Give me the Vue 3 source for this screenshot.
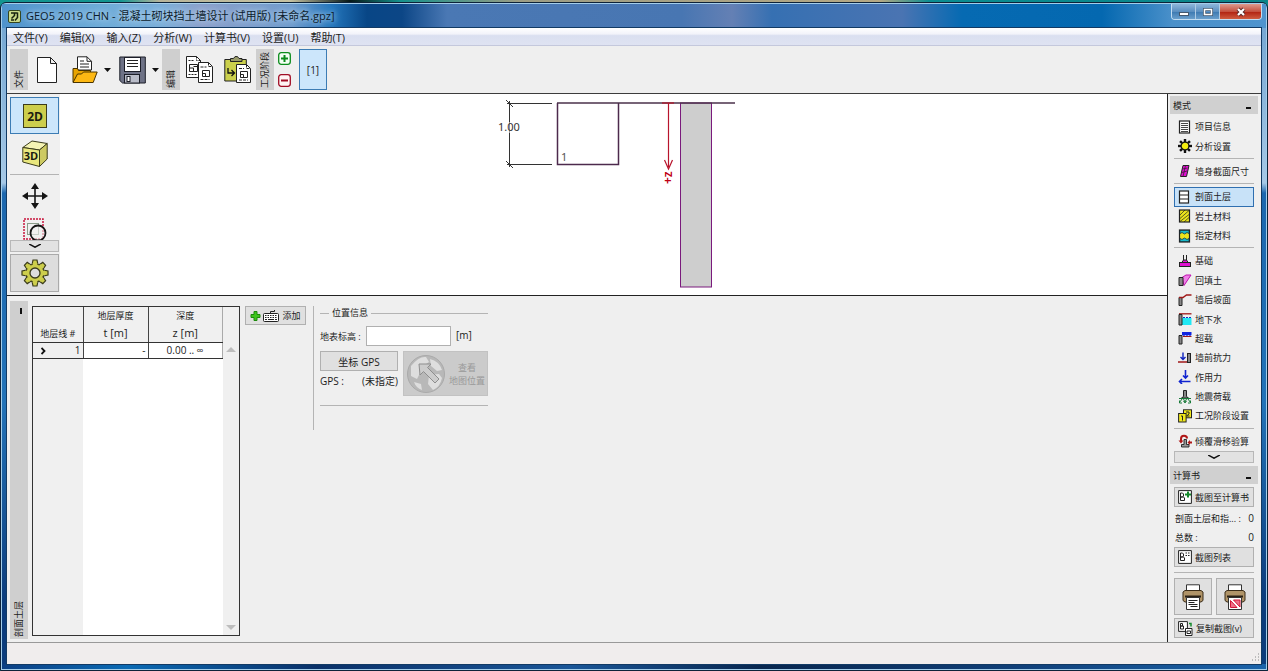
<script setup>
const menus = ['文件(Y)', '编辑(X)', '输入(Z)', '分析(W)', '计算书(V)', '设置(U)', '帮助(T)']

const groups = [
  [
    { id: 'info', label: '项目信息' },
    { id: 'settings', label: '分析设置' },
  ],
  [{ id: 'wall', label: '墙身截面尺寸' }],
  [
    { id: 'profile', label: '剖面土层', active: true },
    { id: 'soil', label: '岩土材料' },
    { id: 'assign', label: '指定材料' },
  ],
  [
    { id: 'base', label: '基础' },
    { id: 'backfill', label: '回填土' },
    { id: 'terrain', label: '墙后坡面' },
    { id: 'water', label: '地下水' },
    { id: 'surcharge', label: '超载' },
    { id: 'resist', label: '墙前抗力' },
    { id: 'force', label: '作用力' },
    { id: 'quake', label: '地震荷载' },
    { id: 'stage', label: '工况阶段设置' },
  ],
  [{ id: 'verify', label: '倾覆滑移验算' }],
]

const gear = Array.from({ length: 8 }, (_, i) => i * 45)
</script>

<template>
  <div class="desktop">
    <div class="window">
      <header class="titlebar">
        <svg class="logo" width="13" height="13" viewBox="0 0 13 13">
          <rect x=".5" y=".5" width="12" height="12" rx="1.5" fill="#c9d98a" stroke="#33451f" />
          <path d="M3 3h3.500v2.500L3.500 8.500M3 10h3M9.500 2.500v5L7 10.500M6.500 3h3" fill="none" stroke="#17220f" stroke-width="1.500" />
        </svg>
        <h1>GEO5 2019 CHN - 混凝土砌块挡土墙设计 (试用版) [未命名.gpz]</h1>
        <div class="winbtns">
          <button aria-label="最小化"><svg width="12" height="10"><rect x="1.500" y="5.500" width="9" height="3" fill="#fff" stroke="#44586e" /></svg></button>
          <button aria-label="最大化"><svg width="12" height="10"><rect x="2.500" y="2.500" width="7" height="5" fill="none" stroke="#44586e" stroke-width="3" /><rect x="2.500" y="2.500" width="7" height="5" fill="none" stroke="#fff" stroke-width="1.500" /></svg></button>
          <button class="close" aria-label="关闭"><svg width="12" height="10"><path d="M3 2l6 6M9 2l-6 6" stroke="#5b2a2a" stroke-width="4" /><path d="M3 2l6 6M9 2l-6 6" stroke="#fff" stroke-width="2.200" /></svg></button>
        </div>
      </header>

      <div class="client">
        <nav class="menubar">
          <button v-for="m in menus" :key="m">{{ m }}</button>
        </nav>

        <div class="toolbar">
          <div class="strip"><span>文件</span></div>
          <button class="tool t-new" aria-label="新建">
            <svg width="20" height="28" viewBox="0 0 20 28"><path d="M.5 1.500h13l6 6v19H.5zM13.500 1.500v6h6" fill="#fff" stroke="#222" /></svg>
          </button>
          <button class="tool t-open" aria-label="打开">
            <svg width="26" height="28" viewBox="0 0 26 28">
              <path d="M5.500 20V.8h9.500l4.500 4.500V14H5.500z" fill="#fff" stroke="#222" />
              <path d="M15 .8v4.500h4.500M8 5h4M8 8h9M8 11h9" fill="none" stroke="#222" />
              <path d="M1 26V12.500h4.500l1 2h12V26z" fill="#e8a400" stroke="#4a3400" />
              <path d="M1 26.500l4.500-8.500h4l2-2h13.700l-4 10.500z" fill="#fdb813" stroke="#4a3400" />
            </svg>
          </button>
          <button class="drop" aria-label="打开选项"><svg width="7" height="4"><path d="M0 0h7L3.500 4z" fill="#111" /></svg></button>
          <button class="tool t-save" aria-label="保存">
            <svg width="27" height="28" viewBox="0 0 27 28">
              <path d="M.8 1h25.500v26H3.500L.8 24.500z" fill="#6e7286" stroke="#1c1e28" />
              <rect x="5.500" y="1.500" width="16" height="14" fill="#fff" stroke="#1c1e28" />
              <path d="M8 4.500h11M8 7.500h11M8 10.500h11" stroke="#222" />
              <rect x="5.500" y="18.500" width="15" height="8.500" fill="#b9bcc8" stroke="#1c1e28" />
              <rect x="8" y="20.500" width="3" height="5" fill="#fff" stroke="#1c1e28" />
            </svg>
          </button>
          <button class="drop last" aria-label="保存选项"><svg width="7" height="4"><path d="M0 0h7L3.500 4z" fill="#111" /></svg></button>
          <div class="strip"><span>编辑</span></div>
          <button class="tool t-copy" aria-label="复制">
            <svg width="27" height="28" viewBox="0 0 27 28">
              <path d="M.5.5h10l4 4v17H.5z" fill="#fff" stroke="#222" />
              <path d="M10.500.5v4h4M2.500 4.500h5M2.500 18.500h8" fill="none" stroke="#222" stroke-dasharray="2 1" />
              <path d="M3.500 8.500h8v7h-8zM3.500 12h4v3.500M7.500 10.500h4" fill="none" stroke="#222" />
              <path d="M12.500 6.500h10l4 4v16h-14z" fill="#fff" stroke="#222" />
              <path d="M22.500 6.500v4h4M14.500 11h6M14.500 23.500h9" fill="none" stroke="#222" stroke-dasharray="3 1" />
              <path d="M16.500 14.500h7v6h-7zM16.500 17.500h3v3" fill="none" stroke="#222" />
            </svg>
          </button>
          <button class="tool t-paste" aria-label="粘贴">
            <svg width="27" height="28" viewBox="0 0 27 28">
              <path d="M.8 3.500h21.500V25H.8z" fill="#cbd04c" stroke="#222" />
              <path d="M6.500 5.500v-3h3L11 .6h2.500L15 2.500h3v3z" fill="#9a9c6a" stroke="#222" />
              <path d="M12.500 8.500h10l4 4v14h-14z" fill="#fff" stroke="#222" />
              <path d="M22.500 8.500v4h4M15 12.500h5M15 24h9" fill="none" stroke="#222" stroke-dasharray="3 1" />
              <path d="M16.500 15.500h7v6h-7zM16.500 18.500h3v3" fill="none" stroke="#222" />
              <path d="M4 12v5h6M7.500 14l3 3-3 3" fill="none" stroke="#111" stroke-width="1.300" />
            </svg>
          </button>
          <div class="strip"><span>工况阶段</span></div>
          <div class="pm">
            <button aria-label="添加工况"><svg width="13" height="13"><rect x=".7" y=".7" width="11.600" height="11.600" rx="2.500" fill="#f4fff4" stroke="#0c8c1c" stroke-width="1.300" /><path d="M6.500 3v7M3 6.500h7" stroke="#0c8c1c" stroke-width="2" /></svg></button>
            <button aria-label="删除工况"><svg width="13" height="13"><rect x=".7" y=".7" width="11.600" height="11.600" rx="2.500" fill="#fff4f4" stroke="#a00c24" stroke-width="1.300" /><path d="M3 6.500h7" stroke="#a00c24" stroke-width="2" /></svg></button>
          </div>
          <button class="stagebtn">[1]</button>
        </div>

        <div class="body">
          <main class="work">
            <section class="view">
              <div class="viewtools">
                <button class="vt on" aria-label="2D">
                  <svg width="24" height="24"><rect x=".5" y=".5" width="23" height="23" fill="#cdce4c" stroke="#3b3c1c" /><text x="12" y="16.500" text-anchor="middle" font-size="12" font-weight="700" fill="#1c1c10">2D</text></svg>
                </button>
                <button class="vt plain" aria-label="3D">
                  <svg width="26" height="28" viewBox="0 0 26 28">
                    <path d="M.8 7.500L10 1l15.200 2.500L17.500 10z" fill="#f5f4b4" stroke="#3b3c1c" />
                    <path d="M17.500 10l7.700-6.500V19L17.500 26.500z" fill="#cdca62" stroke="#3b3c1c" />
                    <path d="M.8 7.500L17.500 10v16.500L.8 22z" fill="#e9e77e" stroke="#3b3c1c" />
                    <text x="9" y="20" text-anchor="middle" font-size="11" font-weight="700" fill="#1c1c10">3D</text>
                  </svg>
                </button>
                <hr />
                <button class="vt plain mv" aria-label="平移">
                  <svg width="26" height="26" viewBox="0 0 26 26"><path d="M13 3v20M3 13h20" stroke="#151515" stroke-width="1.600" /><path d="M13 0l4 6H9zM13 26l4-6H9zM0 13l6-4v8zM26 13l-6-4v8z" fill="#151515" /></svg>
                </button>
                <button class="vt plain zm" aria-label="窗口缩放">
                  <svg width="24" height="22" viewBox="0 0 24 22"><rect x="1" y="1" width="19" height="20" fill="none" stroke="#c8143c" stroke-width="1.500" stroke-dasharray="2 1" /><rect x="4.500" y="5.500" width="11" height="11" fill="none" stroke="#8a9c8a" /><circle cx="15" cy="15" r="7.500" fill="#f0f0f0" fill-opacity=".6" stroke="#151515" stroke-width="1.800" /></svg>
                </button>
                <button class="more" aria-label="更多工具"><svg width="12" height="4"><path d="M0 0l6 3.200L12 0" fill="none" stroke="#111" stroke-width="1.500" /></svg></button>
                <button class="vt cog" aria-label="视图设置">
                  <svg width="28" height="28" viewBox="-14 -14 28 28">
                    <path v-for="a in gear" :key="a" :transform="`rotate(${a})`" d="M-3-8l1-5h4l1 5z" fill="#cdce4c" stroke="#3b3c1c" stroke-width="1.200" />
                    <circle r="9" fill="#cdce4c" stroke="#3b3c1c" stroke-width="1.200" />
                    <path v-for="a in gear" :key="'f' + a" :transform="`rotate(${a})`" d="M-2.300-7.500h4.600v-2.500h-4.600z" fill="#cdce4c" />
                    <circle r="5" fill="#ddd" stroke="#3b3c1c" stroke-width="1.300" />
                  </svg>
                </button>
              </div>
              <svg class="drawing">
                <g fill="none" stroke="#333">
                  <path d="M445 9.500h45M445 70.500h45M447.500 7v66" />
                  <path d="M444 6l7 7M444 67l7 7" />
                </g>
                <rect x="434" y="28" width="25" height="11" fill="#fff" />
                <path d="M447.500 28v11" stroke="#999" />
                <text x="436" y="37" font-size="11" fill="#333">1.00</text>
                <rect x="618.500" y="9" width="31" height="184" fill="#cecece" stroke="#7a1a7c" />
                <path d="M495.500 9v61.500h61V9" fill="none" stroke="#4d2a4d" stroke-width="1.500" />
                <path d="M495 9h178" stroke="#4a304a" stroke-width="1.500" />
                <text x="499" y="67" font-size="11" fill="#555">1</text>
                <path d="M600 9h12" stroke="#c00014" />
                <path d="M606.500 9v64M602.500 66l4 9 4-9" fill="none" stroke="#b8142c" stroke-width="1.200" />
                <text transform="translate(610 90) rotate(-90)" font-size="12" font-weight="600" fill="#c00014">+z</text>
              </svg>
            </section>

            <section class="frame">
              <div class="strip tall"><i></i><span>剖面土层</span></div>
              <div class="gridbox">
                <table>
                  <thead>
                    <tr><th class="c1">地层线 #</th><th class="c2">地层厚度<br /><b>t [m]</b></th><th class="c3">深度<br /><b>z [m]</b></th></tr>
                  </thead>
                  <tbody>
                    <tr><td class="first"><div><svg width="5" height="8"><path d="M.5 1l3 3-3 3" fill="none" stroke="#111" stroke-width="1.800" /></svg>1</div></td><td class="num">-</td><td class="mid">0.00 .. ∞</td></tr>
                  </tbody>
                </table>
                <div class="scroll">
                  <svg width="10" height="5"><path d="M0 5h10L5 0z" fill="#bdbdbd" /></svg>
                  <svg width="10" height="5"><path d="M0 0h10L5 5z" fill="#bdbdbd" /></svg>
                </div>
              </div>
              <div class="addcol">
                <button class="btn add">
                  <svg width="29" height="14" viewBox="0 0 29 14">
                    <path d="M4 2.500h3v3h3v3H7v3H4v-3H1v-3h3z" fill="#3ec41c" stroke="#1c8a0c" />
                    <rect x="13.500" y="4.500" width="15" height="8" rx="1" fill="#fff" stroke="#222" />
                    <path d="M15 6.500h12M15 8.500h12" stroke="#222" stroke-dasharray="1.500 1" /><path d="M15 10.500h2M18 10.500h6M25 10.500h2" stroke="#222" /><path d="M20.500 4V2.500h4V1" fill="none" stroke="#222" />
                  </svg>
                  添加
                </button>
              </div>
              <div class="loc">
                <div class="legend"><span>位置信息</span></div>
                <div class="row"><label for="elev">地表标高 :</label><input id="elev" type="text" /><span class="unit">[m]</span></div>
                <div class="gps">
                  <div class="gpsleft">
                    <button class="btn coord">坐标 GPS</button>
                    <div class="gpsval"><span>GPS :</span><span>(未指定)</span></div>
                  </div>
                  <button class="map" disabled>
                    <svg width="40" height="40" viewBox="0 0 40 40">
                      <circle cx="20" cy="20" r="18.500" fill="#b8b8b8" stroke="#aaa" />
                      <path d="M5 12q8-10 15-9l3 5-6 4 2 5-5 2-3 6-6-3zM24 5q9 2 12 11l-5 1-6-5zM23 21l10-1 3 4q-2 9-9 12l-5-6zM8 28l7 2 1 6q-6-2-8-8z" fill="#dedede" />
                      <path d="M13 10h12l-3.500 3.500L33 25l-4 4-11.500-11.500L14 21z" fill="#ccc" stroke="#8e8e8e" />
                    </svg>
                    <span>查看<br />地图位置</span>
                  </button>
                </div>
                <hr />
              </div>
            </section>
          </main>

          <aside class="side">
            <div class="head"><span>模式</span><i></i></div>
            <div class="modes">
              <template v-for="(g, gi) in groups" :key="gi">
                <hr v-if="gi" />
                <button v-for="it in g" :key="it.id" class="mode" :class="{ active: it.active }">
                  <svg width="14" height="14" viewBox="0 0 14 14">
                    <template v-if="it.id === 'info'"><rect x="1.500" y="1" width="10" height="12" fill="#fff" stroke="#222" stroke-width="1.200" /><path d="M3 3.500h7M3 5.500h7M3 7.500h7M3 9.500h7M3 11.500h7" stroke="#333" stroke-width=".9" /></template>
                    <template v-else-if="it.id === 'settings'"><path v-for="a in gear" :key="a" :transform="`rotate(${a} 7 7)`" d="M5.800 0h2.400v3H5.800z" fill="#111" /><circle cx="7" cy="7" r="3.900" fill="#f4ee10" stroke="#111" stroke-width="1.300" /></template>
                    <template v-else-if="it.id === 'wall'"><path d="M5 1.500h6L8.500 12.500h-6z" fill="#e010d0" stroke="#222" /><path d="M4.500 5l5-1M4 8.500l5-1.500M7.500 1.500l-2.500 11" stroke="#222" stroke-width=".7" /></template>
                    <template v-else-if="it.id === 'profile'"><rect x="1.500" y="1" width="9" height="12" fill="#fff" stroke="#222" stroke-width="1.200" /><path d="M1 5h10M1 9h10" stroke="#222" /></template>
                    <template v-else-if="it.id === 'soil'"><rect x="1.500" y="1" width="10" height="12" fill="#ebe41c" stroke="#222" stroke-width="1.200" /><path d="M2 6l5-5M2 9.500L11 1.500M2 12.500L11 5.500M6 13l5-4.500" stroke="#222" stroke-width=".7" /></template>
                    <template v-else-if="it.id === 'assign'"><rect x="1.500" y="1" width="10" height="12" fill="#ebe41c" stroke="#222" stroke-width="1.200" /><path d="M2 1.500h9v3l-2-1-2.500 1.500L4 3.500l-2 1zM2 12.500h9V9.500l-2 1-2.500-1.500L4 10.500l-2-1z" fill="#18b8c8" stroke="#134" stroke-width=".8" /></template>
                    <template v-else-if="it.id === 'base'"><path d="M5.500 1v5M8.500 1v5M3.500 9l2-3h3l2 3" fill="#e010d0" stroke="#222" /><rect x="1.500" y="8.500" width="11" height="4" fill="#e010d0" stroke="#222" /></template>
                    <template v-else-if="it.id === 'backfill'"><path d="M4 4.500L8 2h5L6 12.500z" fill="#f080e8" stroke="#c010b0" /><path d="M1 4.500h4V12.500H1z" fill="#888" stroke="#222" /></template>
                    <template v-else-if="it.id === 'terrain'"><path d="M1 4.500h3v8h-3z" fill="#888" stroke="#222" /><path d="M1 4.500h4L8.500 2H13.500" fill="none" stroke="#a01818" stroke-width="1.500" /></template>
                    <template v-else-if="it.id === 'water'"><path d="M4 6h9.500v7H4z" fill="#20e8f4" /><path d="M5 5.500h9" stroke="#1830c0" stroke-dasharray="2 1" /><path d="M1 1.800h12.500" stroke="#a01818" stroke-width="1.300" /><path d="M1 2.500h3V13h-3z" fill="#888" stroke="#222" /></template>
                    <template v-else-if="it.id === 'surcharge'"><path d="M4 1h9.500v3l-1.500 1-1.500-1L9 5 7.500 4 6 5 4 4z" fill="#1024e0" /><path d="M5 5.500h8.500" stroke="#a01818" /><path d="M1 4.500h3V13h-3z" fill="#888" stroke="#222" /></template>
                    <template v-else-if="it.id === 'resist'"><path d="M0 11h9" stroke="#a01818" stroke-width="1.500" /><path d="M5 1.500v7M2.500 6L5 8.500 7.500 6" fill="none" stroke="#1024c0" stroke-width="1.400" /><rect x="9.500" y="2.500" width="3" height="9" fill="#888" stroke="#222" /></template>
                    <template v-else-if="it.id === 'force'"><path d="M7.500 0v8M5 5.500L7.500 8 10 5.500M1.500 11.500h11M4 9l-2.500 2.500L4 14" fill="none" stroke="#1024d0" stroke-width="1.600" /></template>
                    <template v-else-if="it.id === 'quake'"><path d="M5.500.5h3v6l2 1.500h-7l2-1.500z" fill="#888" stroke="#222" /><path d="M1 8.500h12M4 9l-2.500 3.500M5.500 9l1.500 3 1.500-3M10 9l2.500 3.500M1.500 10.500v2.500h2.500M12.500 10.500v2.500H10M5.500 11l1.500 2 1.500-2" fill="none" stroke="#187a38" stroke-width="1" /></template>
                    <template v-else-if="it.id === 'stage'"><rect x="5.500" y=".8" width="8" height="8" fill="#f0e81c" stroke="#222" /><path d="M8 3h3v2L8.500 7h3" fill="none" stroke="#222" /><rect x=".6" y="4.500" width="7.500" height="8.500" fill="#f0e81c" stroke="#222" /><path d="M3 7h1.500v4.500" fill="none" stroke="#222" /></template>
                    <template v-else><path d="M3 8V5Q3 1.800 6 1.800T9 4.500" fill="none" stroke="#b01818" stroke-width="2" /><path d="M.5 6.500h5L3 9.500z" fill="#b01818" /><path d="M6 5.500h2.500v5h2.500v2.500H3.500v-2.500H6z" fill="#999" stroke="#222" stroke-width=".9" /><path d="M14 8.500h-3" stroke="#b01818" stroke-width="2" /><path d="M12 6v5L9.500 8.500z" fill="#b01818" /></template>
                  </svg>
                  <span>{{ it.label }}</span>
                </button>
              </template>
            </div>
            <button class="more" aria-label="更多模式"><svg width="12" height="4"><path d="M0 0l6 3.200L12 0" fill="none" stroke="#111" stroke-width="1.500" /></svg></button>

            <div class="head second"><span>计算书</span><i></i></div>
            <div class="report">
              <button class="btn wide">
                <svg width="14" height="14" viewBox="0 0 14 14"><path d="M.6.600h12.800v12.800H.6z" fill="#fff" stroke="#222" /><path d="M2.500 3h2l1 1v2l-1 1h-2zM2.500 7h3l1 1v2.500h-4z" fill="none" stroke="#222" /><path d="M10 1.500v6M7 4.500h6" stroke="#148a2c" stroke-width="2" /></svg>
                <span>截图至计算书</span>
              </button>
              <div class="stat"><span>剖面土层和指... :</span><b>0</b></div>
              <div class="stat"><span>总数 :</span><b>0</b></div>
              <button class="btn wide">
                <svg width="14" height="14" viewBox="0 0 14 14"><path d="M.6.600h12.800v12.800H.6z" fill="#fff" stroke="#222" /><path d="M2.500 3h2l1 1v2l-1 1h-2zM2.500 7h3l1 1v2.500h-4z" fill="none" stroke="#222" /><path d="M7.500 3h5M7.500 5.500h5" stroke="#222" stroke-dasharray="1.500 1" /></svg>
                <span>截图列表</span>
              </button>
              <hr />
              <div class="printers">
                <button v-for="k in 2" :key="k" class="btn print" :aria-label="k === 1 ? '打印计算书' : '打印截图'">
                  <svg width="22" height="26" viewBox="0 0 22 26">
                    <path d="M4.500 9V.8h13V9z" fill="#fff" stroke="#333" />
                    <path d="M1 8l2-1.500h16L21 8v8.500l-2 1.500H3l-2-1.500z" fill="#b09468" stroke="#3a2c18" />
                    <path d="M3 12.500h16" stroke="#2a2014" stroke-width="2" />
                    <path d="M4.500 13.500h13v12h-13z" fill="#fff" stroke="#333" />
                    <path v-if="k === 1" d="M6.500 16.500h9M6.500 18.500h6M6.500 20.500h9M8.500 22.500h7" stroke="#222" />
                    <path v-else d="M6.500 16.500v7h6.500zM9.500 16h6.500v7z" fill="#f07088" stroke="#d01838" />
                  </svg>
                </button>
              </div>
              <button class="btn wide">
                <svg width="15" height="15" viewBox="0 0 15 15"><path d="M.6.600h8.800v9.800H.6z" fill="#fff" stroke="#222" /><path d="M2.500 2.500h2v2.500h-2zM2.500 5h3v3h-3z" fill="none" stroke="#222" /><path d="M7.500 7.500h6.500v7H7.500z" fill="#fff" stroke="#222" /><path d="M9 10h3.500v2.500H9z" fill="none" stroke="#222" /><path d="M11 2.500h2v3" fill="none" stroke="#148a2c" stroke-width="1.500" /></svg>
                <span>复制截图(v)</span>
              </button>
            </div>
          </aside>
        </div>

        <footer class="status">
          <svg width="12" height="12"><path d="M9 2h1M6 5h1M9 5h1M3 8h1M6 8h1M9 8h1" stroke="#aaa" stroke-width="1.500" /></svg>
        </footer>
      </div>
    </div>
  </div>
</template>

<style>
body { margin: 0; }
</style>

<style scoped>
.desktop {
  box-sizing: border-box;
  height: 100vh;
  min-height: 640px;
  padding-top: 2px;
  background: linear-gradient(90deg, #13958f 0, #13958f 120px, #b8b49a 160px, #c6c2a2 290px, #061818 350px, #15918c 400px, #9c9c84 520px, #b5a884 880px, #0b8d90 930px, #0a8488 100%);
  font-family: "Open Sans", "Noto Sans CJK SC", sans-serif;
  font-size: 11px;
  color: #1c1c1c;
}
button { font: inherit; color: inherit; margin: 0; padding: 0; border: 0; background: none; display: flex; align-items: center; justify-content: center; }
svg { display: block; flex: none; }
hr { border: 0; border-top: 1px solid #b4b4b4; margin: 0; height: 0; width: 100%; }
.window {
  box-sizing: border-box;
  height: 100%;
  display: flex;
  flex-direction: column;
  border: 1px solid #0d2238;
  border-radius: 6px 6px 0 0;
  padding: 0 6px 6px;
  box-shadow: inset 0 0 0 1px #a3cdea;
  background:
    linear-gradient(90deg, #0c3f83, #0a6ab4 10%, #0a3068 25%, #1a5698 45%, #08264e 60%, #103f78 80%, #1b63aa) bottom / 100% 6px no-repeat,
    linear-gradient(#6ea2d0, #a6c8e6 180px, #1c67ae 190px, #2373b8 60%, #0c3c7c 90%);
}
.titlebar {
  display: flex;
  align-items: center;
  height: 24px;
  flex: none;
  margin: 1px -5px 0;
  padding-left: 6px;
  background: linear-gradient(90deg, #4f93cc 0, #6eacd8 100px, #7aaed8 160px, #8c9fca 200px, #6f9bcc 290px, #2375bb 330px, #084686 365px, #0c4686 400px, #4a78b4 445px, #4876b2 680px, #6480b4 730px, #3670b2 770px, #4a74b2 900px, #066ab2 960px, #0468b0 1100px, #4a90ca 1170px, #4f94ce 100%);
}
h1 { margin: 0 0 0 5px; font-size: 11px; font-weight: 400; line-height: 20px; white-space: nowrap; color: #0c1c2c; text-shadow: 0 0 5px #b4d4ee, 0 0 8px #b4d4ee; }
.winbtns { display: flex; align-self: flex-start; margin: 0 4px 0 auto; border: 1px solid #c3dcf0; border-top: 0; border-radius: 0 0 4px 4px; overflow: hidden; }
.winbtns button { width: 24px; height: 15px; border-right: 1px solid #b0cce4; background: linear-gradient(#8db6da, #5b8fc0 50%, #3b78b0 51%, #6a9fcc); }
.winbtns .close { width: 41px; border-right: 0; background: linear-gradient(#dd9a8e, #c4513f 50%, #b0200f 51%, #cf5c40); }
.client { flex: 1; min-height: 0; display: flex; flex-direction: column; background: #efefef; box-shadow: 0 0 0 1px #123a64; }
.menubar { display: flex; height: 17px; flex: none; padding-left: 6px; gap: 12px; background: linear-gradient(#fff, #f2f3fa 35%, #dadff0 45%, #dfe3f2); border-bottom: 1px solid #c4c8dc; }
.toolbar { display: flex; align-items: center; height: 47px; flex: none; padding-left: 3px; border-bottom: 1px solid #3c3c3c; }
.strip { box-sizing: border-box; width: 18px; height: 41px; padding-bottom: 2px; flex: none; display: flex; flex-direction: column; align-items: center; justify-content: flex-end; background: #cfcfcf; }
.strip span { writing-mode: vertical-rl; text-orientation: sideways; transform: rotate(180deg); font-size: 9px; line-height: 14px; white-space: nowrap; }
.t-new { margin: 0 15px 0 9px; }
.drop { width: 7px; margin: 0 8px 0 6px; }
.drop.last { margin-right: 3px; }
.t-copy { margin: 0 11px 0 6px; }
.t-paste { margin-right: 5px; }
.pm { display: flex; flex-direction: column; gap: 9px; margin: 0 8px 0 4px; }
.stagebtn { width: 28px; height: 41px; box-sizing: border-box; border: 1px solid #3c7cb4; background: #cce6fb; font-size: 10px; }
.body { flex: 1; min-height: 0; display: flex; }
.work { flex: 1; min-width: 0; display: flex; flex-direction: column; }
.view { display: flex; height: 201px; flex: none; background: #fff; border-bottom: 1px solid #222; }
.viewtools { box-sizing: border-box; width: 55px; flex: none; padding: 3px 3px 0; display: flex; flex-direction: column; align-items: stretch; background: linear-gradient(90deg, #f0f0f0 53px, #fff 53px); }
.viewtools text { font-family: "Open Sans", sans-serif; }
.vt { box-sizing: border-box; height: 37px; width: 49px; border: 1px solid #3c7cb4; background: #cce6fb; flex: none; }
.vt.plain { border: 0; background: none; height: 40px; }
.vt.mv { height: 42px; }
.vt.zm { height: 23px; align-items: flex-end; overflow: hidden; }
.vt.cog { margin-top: 2px; height: 38px; border-color: #aaa; background: #ddd; }
.more { box-sizing: border-box; height: 12px; flex: none; border: 1px solid #b8b8b8; background: #e2e2e2; }
.drawing { flex: 1; min-width: 0; height: 201px; }
.drawing text { font-family: "Noto Sans", sans-serif; }
.frame { flex: 1; min-height: 0; display: flex; align-items: flex-start; padding: 5px 0 3px 3px; }
.strip.tall { height: 100%; justify-content: space-between; padding: 7px 0 2px; }
.strip i { width: 2px; height: 6px; margin-left: 4px; background: #111; }
.gridbox { box-sizing: border-box; align-self: stretch; margin: 5px 0 3px 4px; display: flex; border: 1px solid #333; background: linear-gradient(90deg, #f0f0f0 50px, #fff 50px); }
table { border-collapse: collapse; align-self: flex-start; table-layout: fixed; width: 190px; font-size: 10px; }
th { box-sizing: border-box; height: 35px; padding: 0; font-weight: 400; font-size: 9px; line-height: 17px; background: #f0f0f0; vertical-align: bottom; border-right: 1px solid #444; border-bottom: 1px solid #333; }
th b { font-weight: 400; font-size: 11px; }
.c1 { width: 50px; }
.c2 { width: 65px; }
.c3, td:last-child { border-right-color: #aaa; }
td { height: 15px; line-height: 15px; padding: 0 2px; background: #fff; border-right: 1px solid #444; border-bottom: 1px solid #333; }
.first { background: #f0f0f0; }
.first div { display: flex; align-items: center; justify-content: space-between; padding-left: 6px; }
.num { text-align: right; }
.mid { text-align: center; }
.scroll { width: 16px; display: flex; flex-direction: column; align-items: center; justify-content: space-between; padding: 40px 0 5px; background: #f0f0f0; }
.addcol { box-sizing: border-box; width: 73px; height: 130px; padding: 5px 0 0 5px; }
.btn { box-sizing: border-box; border: 1px solid #b0b0b0; background: #e0e0e0; }
.add { width: 61px; height: 19px; gap: 3px; font-size: 9px; }
.loc { box-sizing: border-box; margin-top: 5px; padding-left: 6px; width: 175px; height: 124px; border-left: 1px solid #b4b4b4; }
.legend { display: flex; align-items: center; gap: 3px; height: 14px; font-size: 9px; line-height: 14px; }
.legend::before { content: ""; width: 9px; border-top: 1px solid #b4b4b4; }
.legend::after { content: ""; flex: 1; border-top: 1px solid #b4b4b4; }
.row { display: flex; align-items: center; height: 20px; margin-top: 6px; }
.row label { width: 46px; font-size: 9px; white-space: nowrap; }
input { box-sizing: border-box; width: 85px; height: 20px; border: 1px solid #b0b0b0; background: #fff; padding: 0 4px; font: inherit; }
.unit { margin-left: 5px; line-height: 16px; padding-bottom: 2px; font-size: 10px; }
.gps { display: flex; justify-content: space-between; margin-top: 5px; }
.gpsleft { width: 78px; font-size: 10px; }
.coord { width: 78px; height: 20px; }
.gpsval { display: flex; justify-content: space-between; line-height: 20px; white-space: nowrap; }
.map { width: 85px; height: 45px; gap: 3px; justify-content: flex-start; padding-left: 2px; box-sizing: border-box; background: #cbcbcb; border: 1px solid #c2c2c2; color: #999; }
.map span { font-size: 9px; line-height: 13px; white-space: nowrap; }
.loc hr { margin-top: 9px; }
.side { box-sizing: border-box; width: 94px; flex: none; border-left: 1px solid #222; padding: 2px 3px 0 2px; display: flex; flex-direction: column; font-size: 9px; }
.head { display: flex; align-items: center; justify-content: space-between; height: 18px; flex: none; padding: 0 7px 0 3px; background: #d0d0d0; }
.head i { width: 5px; height: 2px; margin-top: 6px; background: #111; }
.head.second { margin-top: 3px; }
.modes { flex: 1; min-height: 0; display: flex; flex-direction: column; padding: 3px 4px 0; }
.modes hr { margin: 2px 0 3px; flex: none; }
.mode { box-sizing: border-box; flex: 1; min-height: 0; justify-content: flex-start; gap: 3px; padding-left: 3px; border: 1px solid transparent; white-space: nowrap; }
.mode.active { border-color: #2f6fb0; background: #c8e2f8; }
.side .more { margin: 0 4px; }
.report { padding: 3px 4px 4px; display: flex; flex-direction: column; }
.wide { height: 20px; width: 100%; justify-content: flex-start; gap: 3px; padding-left: 3px; white-space: nowrap; }
.stat { display: flex; justify-content: space-between; line-height: 19px; white-space: nowrap; padding-left: 1px; }
.stat:first-of-type { margin-top: 2px; }
.stat b { font-weight: 400; font-size: 10px; }
.report hr { margin: 5px 0; }
.printers { display: flex; justify-content: space-between; margin-bottom: 3px; }
.print { width: 38px; height: 37px; }
.status { box-sizing: border-box; height: 22px; flex: none; border-top: 1px solid #999; background: #f0eded; display: flex; justify-content: flex-end; align-items: flex-end; }
</style>
